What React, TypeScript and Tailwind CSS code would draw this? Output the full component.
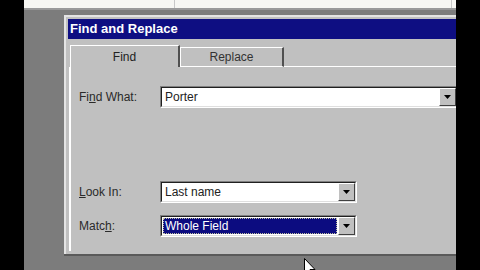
import React from "react";

const ui = { fontFamily: '"Liberation Sans", Arial, sans-serif' };

function Arrow()
{
    return (
        <svg width="7" height="4" viewBox="0 0 7 4">
            <path d="M0 0h7L3.5 4z" fill="#000"/>
        </svg>
    );
}

function DropButton()
{
    return (
        <div className="flex h-full w-[17px] shrink-0 items-center justify-center border border-t-white border-l-white border-b-[#404040] border-r-[#404040] bg-[#c0c0c0]">
            <Arrow/>
        </div>
    );
}

function Combo({value, width, selected}: { value: string; width: string; selected?: boolean })
{
    return (
        <div className={`${width} h-[22px] border border-t-[#808080] border-l-[#808080] border-b-white border-r-white`}>
            <div className="flex h-full border border-t-[#202020] border-l-[#202020] border-b-[#dfdfdf] border-r-[#dfdfdf] bg-white">
                <div className="flex min-w-0 flex-1 items-center p-[1px]">
                    {selected ? (
                        <div className="flex h-full w-full items-center border border-dotted border-[#c0c0a0] bg-[#0c0c80] pl-[1px] text-[12px] text-white">
                            {value}
                        </div>
                    ) : (
                        <span className="pl-[2px] text-[12px] text-[#222]">{value}</span>
                    )}
                </div>
                <DropButton/>
            </div>
        </div>
    );
}

function Label({children}: { children: React.ReactNode })
{
    return <div className="w-[81px] shrink-0 text-[12px] text-[#2a2a2a]">{children}</div>;
}

export default function App()
{
    return (
        <div className="flex h-[270px] w-[480px] overflow-hidden bg-black" style={ui}>
            <div className="w-[24px] shrink-0 bg-black"/>

            <div className="relative flex w-[432px] shrink-0 flex-col overflow-hidden bg-[#7c7c7c]">
                <div className="flex h-[8px] shrink-0 bg-[#f7f7f3]">
                    <div className="w-[151px] border-r border-[#c8c8c8]"/>
                    <div className="w-[277px] border-r border-[#c8c8c8]"/>
                </div>
                <div className="h-[2px] shrink-0 bg-[#9a9a9a]"/>

                <div className="ml-[40px] mt-[5px] h-[239px] w-[420px] shrink-0 border-l-2 border-t-2 border-[#e4e4e4] bg-[#c0c0c0] p-[2px]">
                    <div className="flex h-[20px] items-center bg-[#0e0e82] pl-[2px] text-[13px] font-bold text-white">
                        Find and Replace
                    </div>

                    <div className="pl-[1px] pt-[6px]">
                        <div className="flex h-[22px] items-end pl-[1px]">
                            <div className="flex h-[22px] w-[110px] items-center justify-center border-l border-t border-r-2 border-l-white border-t-white border-r-[#505050] text-[12px] text-[#222]">
                                Find
                            </div>
                            <div className="flex h-[20px] w-[104px] items-center justify-center border-l border-t border-r-2 border-l-white border-t-white border-r-[#505050] border-b border-b-white text-[12px] text-[#333]">
                                Replace
                            </div>
                            <div className="h-[20px] flex-1 border-b border-white"/>
                        </div>

                        <div className="h-[184px] border-l-2 border-white pl-[8px] pt-[19px]">
                            <div className="flex items-center">
                                <Label>Fi<span className="underline">n</span>d What:</Label>
                                <Combo value="Porter" width="w-[298px]"/>
                            </div>

                            <div className="mt-[73px] flex items-center">
                                <Label><span className="underline">L</span>ook In:</Label>
                                <Combo value="Last name" width="w-[197px]"/>
                            </div>

                            <div className="mt-[12px] flex items-center">
                                <Label>Matc<span className="underline">h</span>:</Label>
                                <Combo value="Whole Field" width="w-[197px]" selected/>
                            </div>
                        </div>
                    </div>
                </div>
                <div className="ml-[40px] h-[2px] w-[420px] bg-[#5a5a5a]"/>

                <svg className="absolute left-[280px] top-[258px]" width="12" height="19" viewBox="0 0 12 19">
                    <path d="M0.5 0.5v15l3.5-3.5 2.5 6 2-1-2.5-5.5h5z" fill="#fff" stroke="#000"/>
                </svg>
            </div>

            <div className="w-[24px] shrink-0 bg-black"/>
        </div>
    );
}
